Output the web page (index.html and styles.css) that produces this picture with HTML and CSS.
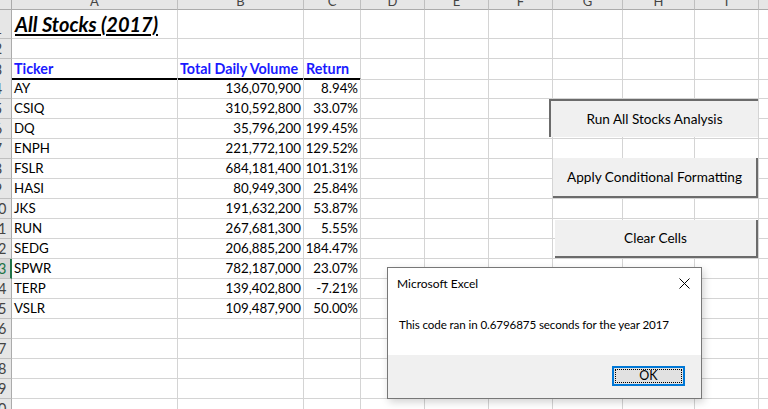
FILE: index.html
```html
<!DOCTYPE html>
<html>
<head>
<meta charset="utf-8">
<link rel="stylesheet" href="styles.css">
</head>
<body>
<div class="sheet">
  <div class="row hdr">
    <div class="rh"></div><div class="ch">A</div><div class="ch">B</div><div class="ch">C</div><div class="ch">D</div><div class="ch">E</div><div class="ch">F</div><div class="ch">G</div><div class="ch">H</div><div class="ch">I</div><div class="ch"></div>
  </div>
  <div class="row r1">
    <div class="rh"><span>1</span></div><div class="c title">All Stocks (2017)</div><div class="c"></div><div class="c"></div><div class="c"></div><div class="c"></div><div class="c"></div><div class="c"></div><div class="c"></div><div class="c"></div><div class="c"></div>
  </div>
  <div class="row">
    <div class="rh"><span>2</span></div><div class="c"></div><div class="c"></div><div class="c"></div><div class="c"></div><div class="c"></div><div class="c"></div><div class="c"></div><div class="c"></div><div class="c"></div><div class="c"></div>
  </div>
  <div class="row">
    <div class="rh"><span>3</span></div><div class="c th">Ticker</div><div class="c th">Total Daily Volume</div><div class="c th">Return</div><div class="c"></div><div class="c"></div><div class="c"></div><div class="c"></div><div class="c"></div><div class="c"></div><div class="c"></div>
  </div>
  <div class="row">
    <div class="rh"><span>4</span></div><div class="c">AY</div><div class="c n">136,070,900</div><div class="c n">8.94%</div><div class="c"></div><div class="c"></div><div class="c"></div><div class="c"></div><div class="c"></div><div class="c"></div><div class="c"></div>
  </div>
  <div class="row">
    <div class="rh"><span>5</span></div><div class="c">CSIQ</div><div class="c n">310,592,800</div><div class="c n">33.07%</div><div class="c"></div><div class="c"></div><div class="c"></div><div class="c"></div><div class="c"></div><div class="c"></div><div class="c"></div>
  </div>
  <div class="row">
    <div class="rh"><span>6</span></div><div class="c">DQ</div><div class="c n">35,796,200</div><div class="c n">199.45%</div><div class="c"></div><div class="c"></div><div class="c"></div><div class="c"></div><div class="c"></div><div class="c"></div><div class="c"></div>
  </div>
  <div class="row">
    <div class="rh"><span>7</span></div><div class="c">ENPH</div><div class="c n">221,772,100</div><div class="c n">129.52%</div><div class="c"></div><div class="c"></div><div class="c"></div><div class="c"></div><div class="c"></div><div class="c"></div><div class="c"></div>
  </div>
  <div class="row">
    <div class="rh"><span>8</span></div><div class="c">FSLR</div><div class="c n">684,181,400</div><div class="c n">101.31%</div><div class="c"></div><div class="c"></div><div class="c"></div><div class="c"></div><div class="c"></div><div class="c"></div><div class="c"></div>
  </div>
  <div class="row">
    <div class="rh"><span>9</span></div><div class="c">HASI</div><div class="c n">80,949,300</div><div class="c n">25.84%</div><div class="c"></div><div class="c"></div><div class="c"></div><div class="c"></div><div class="c"></div><div class="c"></div><div class="c"></div>
  </div>
  <div class="row">
    <div class="rh"><span>10</span></div><div class="c">JKS</div><div class="c n">191,632,200</div><div class="c n">53.87%</div><div class="c"></div><div class="c"></div><div class="c"></div><div class="c"></div><div class="c"></div><div class="c"></div><div class="c"></div>
  </div>
  <div class="row">
    <div class="rh"><span>11</span></div><div class="c">RUN</div><div class="c n">267,681,300</div><div class="c n">5.55%</div><div class="c"></div><div class="c"></div><div class="c"></div><div class="c"></div><div class="c"></div><div class="c"></div><div class="c"></div>
  </div>
  <div class="row">
    <div class="rh"><span>12</span></div><div class="c">SEDG</div><div class="c n">206,885,200</div><div class="c n">184.47%</div><div class="c"></div><div class="c"></div><div class="c"></div><div class="c"></div><div class="c"></div><div class="c"></div><div class="c"></div>
  </div>
  <div class="row">
    <div class="rh sel"><span>13</span></div><div class="c">SPWR</div><div class="c n">782,187,000</div><div class="c n">23.07%</div><div class="c"></div><div class="c"></div><div class="c"></div><div class="c"></div><div class="c"></div><div class="c"></div><div class="c"></div>
  </div>
  <div class="row">
    <div class="rh"><span>14</span></div><div class="c">TERP</div><div class="c n">139,402,800</div><div class="c n">-7.21%</div><div class="c"></div><div class="c"></div><div class="c"></div><div class="c"></div><div class="c"></div><div class="c"></div><div class="c"></div>
  </div>
  <div class="row">
    <div class="rh"><span>15</span></div><div class="c">VSLR</div><div class="c n">109,487,900</div><div class="c n">50.00%</div><div class="c"></div><div class="c"></div><div class="c"></div><div class="c"></div><div class="c"></div><div class="c"></div><div class="c"></div>
  </div>
  <div class="row">
    <div class="rh"><span>16</span></div><div class="c"></div><div class="c"></div><div class="c"></div><div class="c"></div><div class="c"></div><div class="c"></div><div class="c"></div><div class="c"></div><div class="c"></div><div class="c"></div>
  </div>
  <div class="row">
    <div class="rh"><span>17</span></div><div class="c"></div><div class="c"></div><div class="c"></div><div class="c"></div><div class="c"></div><div class="c"></div><div class="c"></div><div class="c"></div><div class="c"></div><div class="c"></div>
  </div>
  <div class="row">
    <div class="rh"><span>18</span></div><div class="c"></div><div class="c"></div><div class="c"></div><div class="c"></div><div class="c"></div><div class="c"></div><div class="c"></div><div class="c"></div><div class="c"></div><div class="c"></div>
  </div>
  <div class="row">
    <div class="rh"><span>19</span></div><div class="c"></div><div class="c"></div><div class="c"></div><div class="c"></div><div class="c"></div><div class="c"></div><div class="c"></div><div class="c"></div><div class="c"></div><div class="c"></div>
  </div>
  <div class="row">
    <div class="rh"><span>20</span></div><div class="c"></div><div class="c"></div><div class="c"></div><div class="c"></div><div class="c"></div><div class="c"></div><div class="c"></div><div class="c"></div><div class="c"></div><div class="c"></div>
  </div>

  <div class="btn btn-run">Run All Stocks Analysis</div>
  <div class="btn btn-raised btn-format">Apply Conditional Formatting</div>
  <div class="btn btn-raised btn-clear">Clear Cells</div>

  <div class="dialog">
    <div class="dlg-body">
      <div class="dlg-title">
        <span>Microsoft Excel</span>
        <svg class="dlg-close" width="11" height="11" viewBox="0 0 11 11"><path d="M0.5 0.5 L10.5 10.5 M10.5 0.5 L0.5 10.5" stroke="#000" stroke-width="1" fill="none"/></svg>
      </div>
      <div class="dlg-msg">This code ran in 0.6796875 seconds for the year 2017</div>
    </div>
    <div class="dlg-foot">
      <div class="ok"><span class="ok-inner">OK</span></div>
    </div>
  </div>
</div>
</body>
</html>
```

FILE: styles.css
```css
* { box-sizing: border-box; }
html, body {
  margin: 0;
  padding: 0;
  width: 768px;
  height: 409px;
  overflow: hidden;
  background: #ffffff;
}
.sheet {
  position: relative;
  width: 768px;
  height: 409px;
  overflow: hidden;
  font-family: Lato, "Open Sans", sans-serif;
  font-size: 13.3px;
  color: #000;
}
.row {
  display: grid;
  grid-template-columns: 12px 166px 126px 57px 64px 64px 64px 70px 72px 64px 40px;
  height: 20px;
}
.row.hdr { height: 10px; }
.row.r1 { height: 29px; }
.c {
  border-right: 1px solid #d4d4d4;
  border-bottom: 1px solid #d4d4d4;
  padding: 0 2px;
  white-space: nowrap;
  overflow: visible;
  display: flex;
  align-items: flex-end;
  line-height: 19px;
}
.ch {
  background: #e6e6e6;
  border-right: 1px solid #bfbfbf;
  border-bottom: 1px solid #ababab;
  display: flex;
  justify-content: center;
  align-items: flex-end;
  overflow: hidden;
  font-size: 13px;
  line-height: 13px;
  color: #444;
  padding-bottom: 1px;
}
.rh {
  background: #e6e6e6;
  border-right: 1px solid #ababab;
  border-bottom: 1px solid #bfbfbf;
  overflow: hidden;
  position: relative;
  color: #444;
  font-size: 14.5px;
}
.rh span {
  position: absolute;
  left: -15px;
  width: 26px;
  bottom: 0;
  line-height: 19px;
  text-align: center;
}
.hdr .rh { border-bottom: 1px solid #ababab; }
.rh.sel {
  background: #d6d6d6;
  border-right: 2px solid #217346;
  color: #217346;
}
.title {
  font-size: 20px;
  font-weight: bold;
  font-style: italic;
  text-decoration: underline;
  text-decoration-thickness: 1.5px;
  text-underline-offset: 2px;
  padding-left: 3px;
  line-height: 27px;
}
.th {
  color: #1a1aff;
  font-weight: bold;
  font-size: 14.3px;
}
.row:nth-child(4) .c:nth-child(-n+4) { border-bottom: 2px solid #000; }
.n { justify-content: flex-end; }

.btn {
  position: absolute;
  background: #f0f0f0;
  display: flex;
  align-items: center;
  justify-content: center;
  font-size: 13.6px;
  color: #000;
}
.btn-run {
  left: 549px; top: 99px; width: 209px; height: 38px;
  border-top: 2px solid #6b6b6b;
  border-left: 2px solid #6b6b6b;
}
.btn-raised {
  border-right: 2px solid #6b6b6b;
  border-bottom: 2px solid #6b6b6b;
}
.btn-format { left: 553px; top: 158px; width: 205px; height: 40px; }
.btn-clear { left: 555px; top: 220px; width: 203px; height: 38px; }

.dialog {
  position: absolute;
  left: 387px; top: 267px;
  width: 315px; height: 132px;
  border: 1px solid #777;
  background: #fff;
  box-shadow: 2px 3px 8px rgba(0,0,0,0.18);
  font-family: Lato, "Noto Sans", sans-serif;
  font-size: 11.6px;
  letter-spacing: -0.1px;
  display: flex;
  flex-direction: column;
}
.dlg-body { height: 87px; padding: 0 0 0 9px; }
.dlg-title {
  display: flex;
  justify-content: space-between;
  align-items: center;
  height: 30px;
  padding-right: 11px;
  font-size: 12px;
  letter-spacing: 0;
}
.dlg-close { display: block; }
.dlg-msg { padding-left: 2px; margin-top: 20px; }
.dlg-foot {
  flex: 1;
  background: #f0f0f0;
  display: flex;
  justify-content: flex-end;
  align-items: flex-start;
  padding: 11px 16px 0 0;
}
.ok {
  width: 73px; height: 20px;
  border: 2px solid #0078d7;
  background: #e1e1e1;
  padding: 1px;
}
.ok-inner {
  display: flex;
  width: 100%; height: 100%;
  border: 1px dotted #000;
  align-items: center;
  justify-content: center;
  font-size: 12.5px;
  line-height: 12px;
  letter-spacing: 0;
}
```
